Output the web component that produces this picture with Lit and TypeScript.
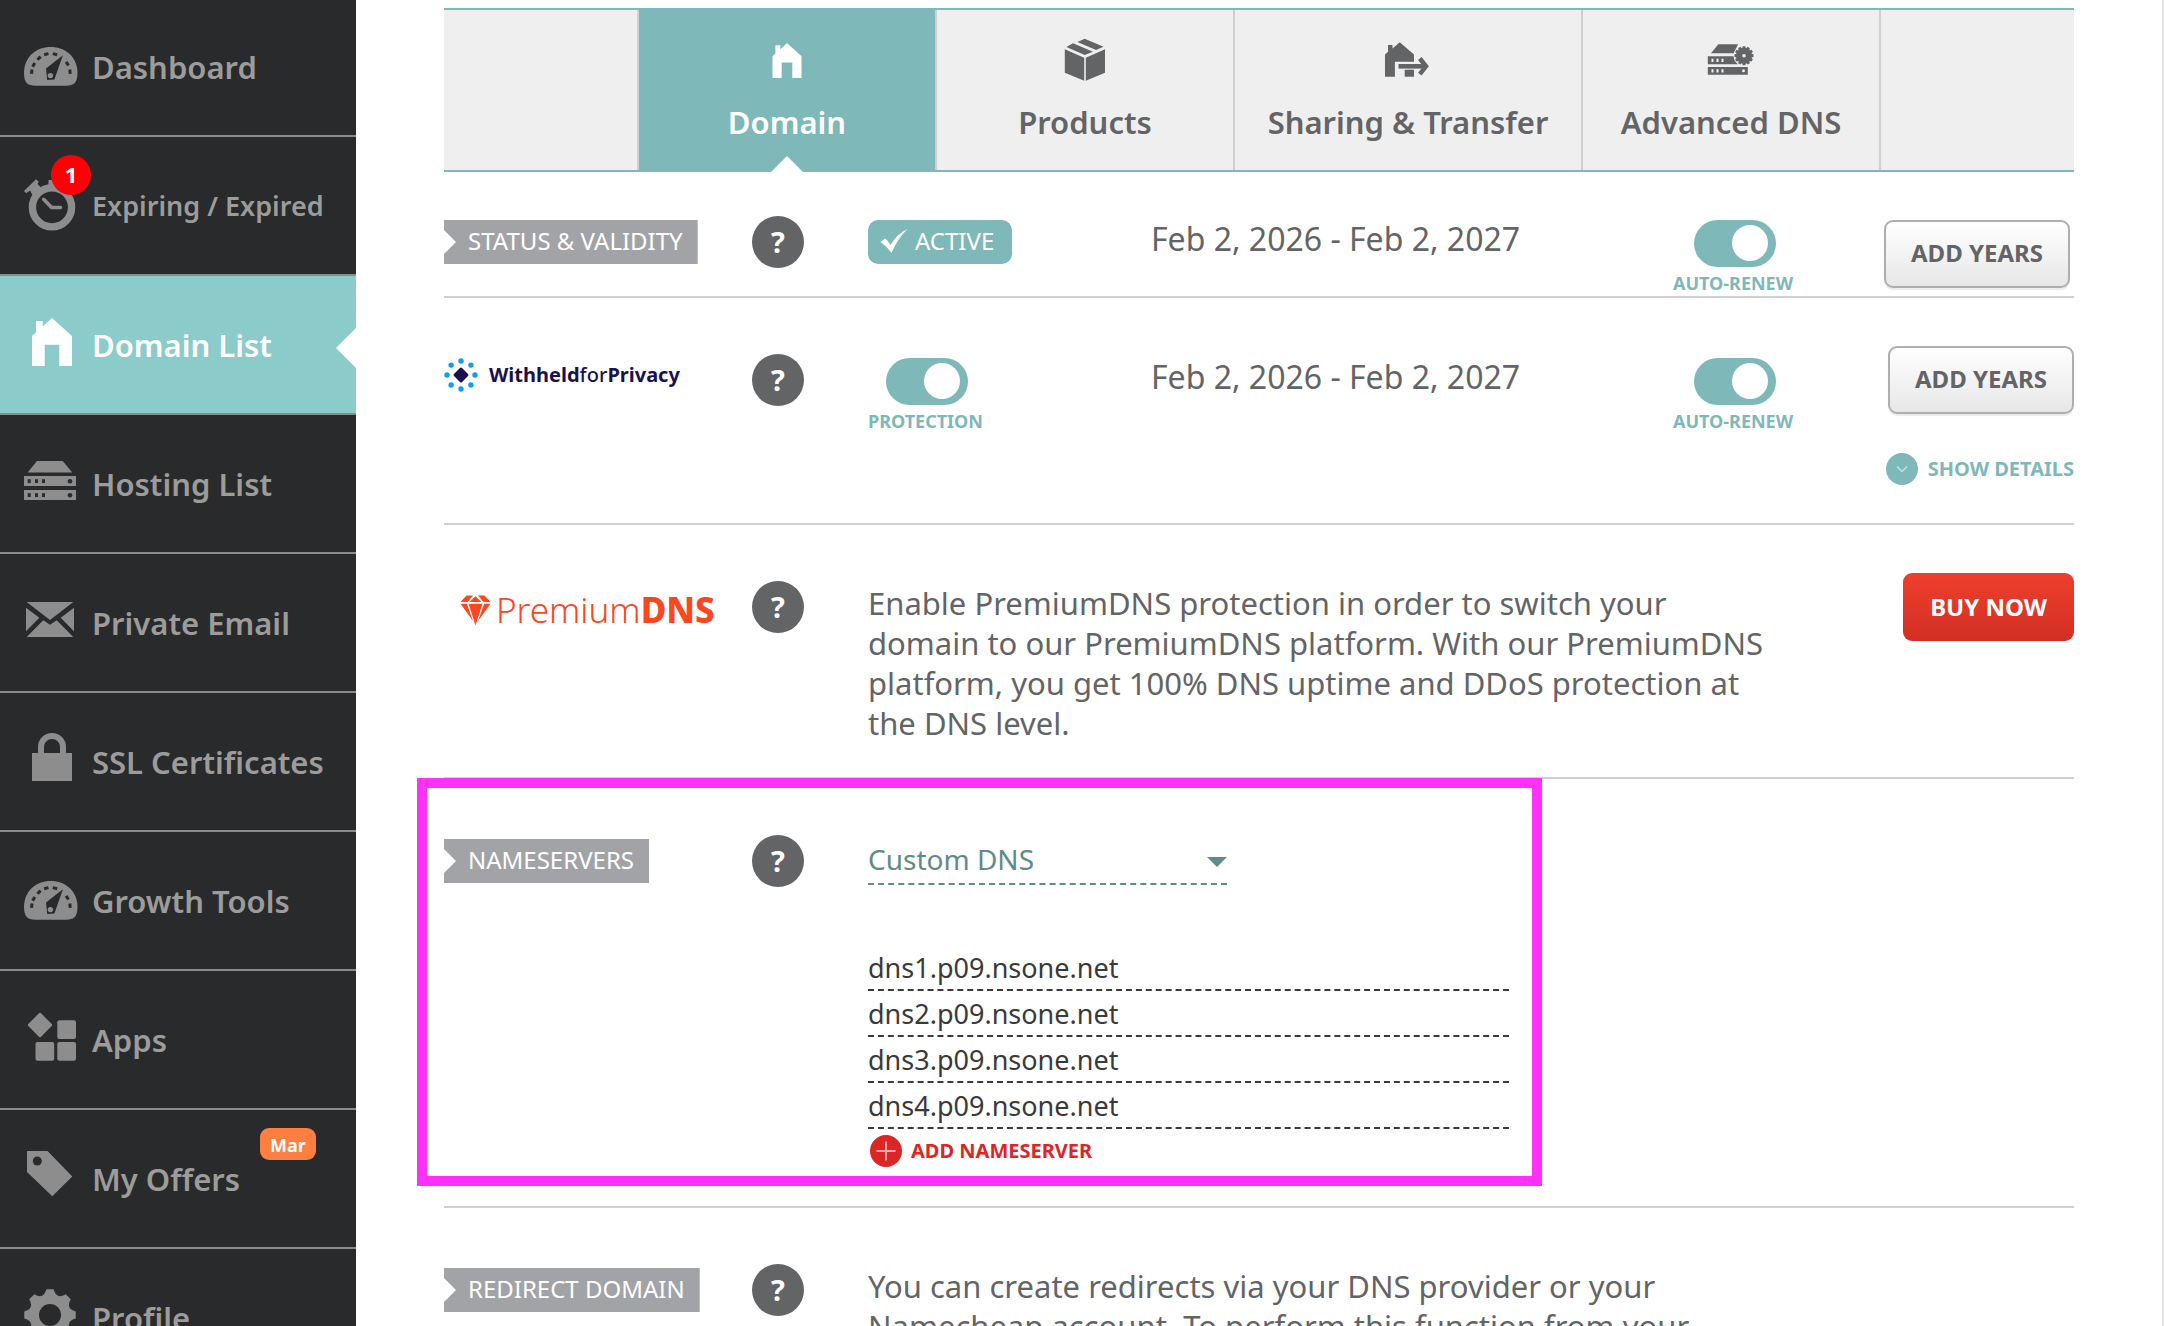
import { LitElement, html, svg, css, nothing, TemplateResult, SVGTemplateResult } from "lit";
import { customElement, state } from "lit/decorators.js";
import { classMap } from "lit/directives/class-map.js";

interface NavItem {
  label: string;
  icon: SVGTemplateResult;
  active?: boolean;
  small?: boolean;
  count?: string;
  tag?: string;
}

interface Tab {
  label: string;
  icon: SVGTemplateResult;
  wide?: boolean;
}

/** Closed outline of a cog wheel with curved valleys between its teeth. */
function cog(cx: number, cy: number, outer: number, inner: number, teeth: number, half: number): string {
  const at = (deg: number, r: number) => {
    const a = ((deg - 90) * Math.PI) / 180;
    return `${(cx + r * Math.cos(a)).toFixed(2)} ${(cy + r * Math.sin(a)).toFixed(2)}`;
  };
  const step = 360 / teeth;
  let d = `M${at(-half, outer)}`;
  for (let i = 0; i < teeth; i++) {
    const a = i * step;
    d += `L${at(a + half, outer)}Q${at(a + step / 2, inner)} ${at(a + step - half, outer)}`;
  }
  return d + "Z";
}

const HOUSE = "M28 2L48 20V50H35.3V28.7H20.7V50H8V20L12 16.3V5H18.7V10.4Z";

const gauge = svg`
  <path d="M0 35C0 19 12 9 26.7 9S53.5 19 53.5 35C53.5 44.500 50 47.700 42 47.700H11.500C3.500 47.700 0 44.500 0 35Z"/>
  <g class="cut">
    <rect x="6.300" y="31.500" width="3" height="4.400" transform="rotate(6 7.800 33.700)"/>
    <rect x="8.200" y="24.700" width="3" height="4.400" transform="rotate(30 9.700 26.900)"/>
    <rect x="13.500" y="18" width="3" height="4.400" transform="rotate(46 15 20.200)"/>
    <rect x="20.800" y="14" width="3" height="4.400" transform="rotate(76 22.300 16.200)"/>
    <rect x="29.500" y="14" width="3" height="4.400" transform="rotate(-76 31 16.200)"/>
    <rect x="41.800" y="23.500" width="3" height="4.400" transform="rotate(-32 43.300 25.700)"/>
    <rect x="44.500" y="31.500" width="3" height="4.400" transform="rotate(-6 46 33.700)"/>
    <path d="M38.900 17.300L22 30.500L23.200 42L30.400 41.500Z"/>
  </g>
  <circle cx="26.400" cy="37.600" r="2.700"/>`;

const stopwatch = svg`
  <circle cx="28" cy="30.300" r="19.600" fill="none" stroke="currentColor" stroke-width="7.400"/>
  <path d="M0 14L12 2.300L14.700 4.700L13.500 7L18 11.500L9 19L6 13.500L2.300 16.300Z"/>
  <rect x="24.500" y="3" width="8" height="8"/>
  <path d="M19.700 22.300L27.600 30.500H36.500" fill="none" stroke="currentColor" stroke-width="3.600" stroke-linecap="round" stroke-linejoin="round"/>`;

const house = svg`<path d=${HOUSE}/>`;

const server = svg`
  <path d="M13 6H38.700L48.300 17.500H3.700Z"/>
  <rect x="0" y="21" width="52" height="10"/>
  <rect x="0" y="35" width="52" height="10"/>
  <g class="cut">
    <rect x="3.700" y="24.200" width="3" height="3.800"/><rect x="11" y="24.200" width="3" height="3.800"/><rect x="18" y="24.200" width="3" height="3.800"/>
    <rect x="3.700" y="38.200" width="3" height="3.800"/><rect x="11" y="38.200" width="3" height="3.800"/><rect x="18" y="38.200" width="3" height="3.800"/>
    <circle cx="46" cy="26.200" r="2.300"/><circle cx="46" cy="40.200" r="2.300"/>
  </g>`;

const mail = svg`
  <path d="M2.700 8H49.300L26 26ZM2 13.700V37.300L15.300 23.700ZM50 13.700V37.300L36.700 23.700ZM2.700 43L19.300 26.300L26 30.700L32.700 26.300L49.300 43Z"/>`;

const lock = svg`
  <rect x="8" y="20" width="40" height="28"/>
  <path d="M17 21V14A11 11 0 0 1 39 14V21" fill="none" stroke="currentColor" stroke-width="6"/>`;

const apps = svg`
  <rect x="7" y="5" width="18" height="18" rx="1.500" transform="rotate(45 16 14)"/>
  <rect x="33.300" y="9.300" width="18.700" height="18.700" rx="2"/>
  <rect x="11.500" y="31" width="18.700" height="18.700" rx="2"/>
  <rect x="33.300" y="31" width="18.700" height="18.700" rx="2"/>`;

const tag = svg`
  <path d="M3 1H23.500L48.300 26.500L28.300 46.300L3 22Z"/>
  <circle class="cut" cx="13.300" cy="11" r="4.500"/>`;

const gear = svg`
  <path d=${cog(26, 26, 26, 16.5, 8, 8)}/>
  <circle class="cut" cx="26" cy="26" r="11"/>`;

const tabHouse = svg`<path transform="translate(9.700 3.600) scale(.725 .73)" d=${HOUSE}/>`;

const tabBox = svg`
  <path d="M9.800 11.300L29.200 19.700V42.700L9.800 34.700ZM30.800 19.700L50 11.300V34.700L30.800 42.700Z"/>
  <path d="M29.700 .700L48.500 8.700L41 12L22.400 4ZM18 5.300L38 13.700L29.700 17L11.400 9Z"/>`;

const tabShare = svg`
  <path d="M21.800 4.300L36 16.500V23.700H16.900V38.700H7V16.500L10 13.700V7H14.500V10.500Z"/>
  <rect x="26.700" y="31.700" width="9.300" height="7"/>
  <path d="M20.500 26H46V30.600H20.500Z"/>
  <path d="M41.800 20.500L48 28.300L41.800 36.100" fill="none" stroke="currentColor" stroke-width="4.500"/>`;

const tabServer = svg`
  <path d="M17.300 6.300H37L33 15.300H10Z"/>
  <path d="M6.800 18.300H33L37 26.300H6.800ZM6.800 29H46.800V36.700H6.800Z"/>
  <g class="hole">
    <rect x="10.500" y="20.700" width="2" height="3.300"/><rect x="15.500" y="20.700" width="2" height="3.300"/><rect x="20.500" y="20.700" width="2" height="3.300"/>
    <rect x="10.500" y="31.200" width="2" height="3.300"/><rect x="15.500" y="31.200" width="2" height="3.300"/><rect x="20.500" y="31.200" width="2" height="3.300"/>
    <circle cx="42.500" cy="32.800" r="1.500"/>
    <circle cx="43" cy="17.700" r="10.500"/>
  </g>
  <path d=${cog(43, 17.7, 9.6, 6, 12, 8)}/>
  <circle class="hole" cx="43" cy="17.700" r="1.800"/>`;

const NAV: NavItem[] = [
  { label: "Dashboard", icon: gauge },
  { label: "Expiring / Expired", icon: stopwatch, small: true, count: "1" },
  { label: "Domain List", icon: house, active: true },
  { label: "Hosting List", icon: server },
  { label: "Private Email", icon: mail },
  { label: "SSL Certificates", icon: lock },
  { label: "Growth Tools", icon: gauge },
  { label: "Apps", icon: apps },
  { label: "My Offers", icon: tag, tag: "Mar" },
  { label: "Profile", icon: gear },
];

const TABS: Tab[] = [
  { label: "Domain", icon: tabHouse },
  { label: "Products", icon: tabBox },
  { label: "Sharing & Transfer", icon: tabShare, wide: true },
  { label: "Advanced DNS", icon: tabServer },
];

@customElement("app-root")
export class AppRoot extends LitElement {
  @state() private tab = "Domain";
  @state() private nameservers = [
    "dns1.p09.nsone.net",
    "dns2.p09.nsone.net",
    "dns3.p09.nsone.net",
    "dns4.p09.nsone.net",
  ];

  static styles = css`
    :host {
      display: flex;
      height: 100vh;
      overflow: hidden;
      background: #fff;
      color: #636466;
      font-family: "Noto Sans", "Open Sans", sans-serif;
      font-size: 31px;
      line-height: 40px;
    }
    *, *::before, *::after { box-sizing: border-box; }
    svg { display: block; flex: none; fill: currentColor; }
    button, input, select { font: inherit; color: inherit; margin: 0; padding: 0; border: 0; border-radius: 0; background: none; }
    button { cursor: pointer; }
    a { color: inherit; text-decoration: none; }

    .side { flex: none; width: 356px; background: #292a2c; margin-top: -2px; }
    .nav-item {
      position: relative;
      display: flex;
      align-items: center;
      gap: 14px;
      height: 139px;
      padding-left: 24px;
      border-bottom: 2px solid #8b8b8b;
      color: #9c9c9a;
      font-size: 31px;
      font-weight: 600;
      white-space: nowrap;
    }
    .nav-item svg { color: #8d8d8d; }
    .nav-item.small { font-size: 27px; }
    .nav-item.active { background: #8bccca; color: #fff; }
    .nav-item.active svg { color: #fff; }
    .nav-item.active::after {
      content: "";
      position: absolute;
      right: 0;
      top: 52px;
      border: 20px solid transparent;
      border-left: 0;
      border-right-color: #fff;
    }
    .cut { fill: #292a2c; }
    .count, .tag { position: absolute; color: #fff; font-weight: 700; text-align: center; }
    .count { left: 51px; top: 18px; width: 40px; height: 40px; border-radius: 50%; background: #ff0008; font-size: 22px; line-height: 38px; }
    .tag { left: 260px; top: 18px; width: 56px; height: 32px; border-radius: 9px; background: #ff7e40; font-size: 18px; line-height: 34px; }

    .main { flex: 1; min-width: 0; padding: 8px 88px 0 88px; border-right: 2px solid #e2e2e2; }

    .tabs { display: flex; justify-content: center; border: solid #7fb8b8; border-width: 2px 0; background: #efefef; }
    .tab {
      position: relative;
      display: flex;
      flex-direction: column;
      align-items: center;
      gap: 20px;
      width: 298px;
      height: 160px;
      padding-top: 28px;
      border-right: 2px solid #cfd0d1;
      font-size: 31px;
      font-weight: 600;
    }
    .tab:first-child { width: 300px; border-left: 2px solid #cfd0d1; }
    .tab.wide { width: 348px; }
    .tab.on { background: #7fb8b8; background-clip: padding-box; color: #fff; }
    .tab.on::after {
      content: "";
      position: absolute;
      left: calc(50% - 16px);
      bottom: -2px;
      border: 16px solid transparent;
      border-top: 0;
      border-bottom-color: #fff;
    }
    .hole { fill: #efefef; }

    .row {
      position: relative;
      display: grid;
      grid-template-columns: 308px 116px 283px minmax(0, 1fr) 118px 283px;
      align-items: start;
      padding-top: 56px;
      border-bottom: 2px solid #cfd0d1;
    }
    .row.status { padding: 44px 0 3px; }
    .row.privacy { padding-bottom: 38px; }
    .row.premium { padding-bottom: 34px; }
    .row.servers { padding-bottom: 39px; }
    .row.last { border-bottom: 0; }

    .ribbon {
      justify-self: start;
      height: 44px;
      margin-top: 4px;
      padding: 0 15px 0 24px;
      background: #a2a3a7;
      clip-path: polygon(0 0, 100% 0, 100% 100%, 0 100%, 0 34px, 12px 22px, 0 10px);
      color: #fff;
      font-size: 24px;
      font-weight: 400;
      line-height: 41px;
    }
    .help {
      width: 52px;
      height: 52px;
      border-radius: 50%;
      background: #636466;
      color: #fff;
      font-size: 29px;
      font-weight: 700;
      line-height: 52px;
      text-align: center;
    }
    .active-pill {
      display: flex;
      align-items: center;
      justify-self: start;
      gap: 7px;
      height: 44px;
      margin-top: 4px;
      padding: 0 18px 2px 12px;
      border-radius: 10px;
      background: #7fb8b8;
      color: #fff;
      font-size: 24px;
    }
    .date { margin-top: 3px; font-size: 32px; white-space: nowrap; }

    .toggle {
      display: inline-flex;
      flex-direction: column;
      align-items: center;
      justify-self: start;
      gap: 6px;
      margin-top: 4px;
      color: #7fb8b8;
      font-size: 18px;
      font-weight: 700;
      line-height: 20px;
      white-space: nowrap;
    }
    .toggle input {
      appearance: none;
      width: 82px;
      height: 47px;
      margin-left: 4px;
      border-radius: 24px;
      padding: 5px 8px;
      background: #c4c5c7;
      cursor: pointer;
    }
    .toggle input::before { content: ""; display: block; width: 36px; height: 36px; border-radius: 50%; background: #fff; }
    .toggle input:checked { background: #7fb8b8; }
    .toggle input:checked::before { margin-left: auto; }

    .actions { display: flex; flex-direction: column; align-items: flex-end; grid-column: 6; margin-top: -8px; }
    .status .actions { margin-top: 4px; padding-right: 4px; }
    .btn {
      height: 68px;
      padding: 0 25px 2px;
      border: 2px solid #adaeb0;
      border-radius: 9px;
      background: linear-gradient(#fff, #e7e7e7);
      box-shadow: 0 2px 1px #ececec;
      font-size: 24px;
      font-weight: 700;
      white-space: nowrap;
    }
    .btn.buy { border: 0; padding: 0 27px; background: linear-gradient(#ee3f2d, #d22f24); box-shadow: none; color: #fff; }
    .details {
      display: flex;
      align-items: center;
      gap: 10px;
      margin-top: 39px;
      color: #7fb8b8;
      font-size: 20px;
      font-weight: 700;
      line-height: 32px;
      white-space: nowrap;
    }

    .withheld { display: flex; align-items: center; gap: 11px; margin-top: 4px; height: 34px; color: #1b114f; font-size: 20px; font-weight: 700; line-height: 34px; }
    .withheld span { font-weight: 500; }
    .premium-logo { display: flex; align-items: center; gap: 5px; margin-top: 9px; padding-left: 16px; color: #fa4720; font-size: 35px; font-weight: 300; white-space: nowrap; }
    .premium-logo b { font-weight: 800; }

    .copy { grid-column: 3 / 6; max-width: 904px; margin: 2px 0 0; }

    .ns { grid-column: 3 / 6; display: flex; flex-direction: column; align-items: flex-start; }
    .select-wrap { position: relative; display: block; width: 359px; margin-bottom: 60px; color: #5f8b8a; font-size: 28px; }
    .select-wrap select { display: block; appearance: none; width: 100%; height: 50px; border-bottom: 2px dashed #5f8b8a; cursor: pointer; }
    .select-wrap::after {
      content: "";
      position: absolute;
      right: 0;
      top: 22px;
      border: 10px solid transparent;
      border-bottom: 0;
      border-top-color: #5f8b8a;
      pointer-events: none;
    }
    .server { width: 641px; height: 46px; border-bottom: 2px dashed #3a3a3b; color: #3a3a3b; font-size: 27px; }
    .add {
      display: flex;
      align-items: center;
      gap: 9px;
      margin-top: 6px;
      padding-left: 2px;
      color: #dc2626;
      font-size: 20px;
      font-weight: 700;
      line-height: 32px;
    }
    .highlight { position: absolute; left: -27px; top: -1px; bottom: 20px; width: 1125px; border: 10px solid #ff30f8; pointer-events: none; }
  `;

  private help(topic: string): TemplateResult {
    return html`<button class="help" aria-label=${"Help: " + topic}>?</button>`;
  }

  private toggle(id: string, label: string): TemplateResult {
    return html`<label class="toggle" for=${id}>
      <input id=${id} type="checkbox" role="switch" checked />${label}
    </label>`;
  }

  private addNameserver() {
    this.nameservers = [...this.nameservers, ""];
  }

  private nav() {
    return html`<nav class="side">
      ${NAV.map(
        (item) => html`<a class=${classMap({ "nav-item": true, active: !!item.active, small: !!item.small })} href="#">
          <svg width="54" height="57" viewBox="0 0 54 57" aria-hidden="true">${item.icon}</svg>
          ${item.label}
          ${item.count ? html`<span class="count">${item.count}</span>` : nothing}
          ${item.tag ? html`<span class="tag">${item.tag}</span>` : nothing}
        </a>`
      )}
    </nav>`;
  }

  private tabs() {
    return html`<div class="tabs" role="tablist">
      ${TABS.map(
        (t) => html`<button
          class=${classMap({ tab: true, wide: !!t.wide, on: t.label === this.tab })}
          role="tab"
          aria-selected=${t.label === this.tab}
          @click=${() => (this.tab = t.label)}
        >
          <svg width="60" height="44" viewBox="0 0 60 44" aria-hidden="true">${t.icon}</svg>
          ${t.label}
        </button>`
      )}
    </div>`;
  }

  private withheldLogo() {
    const dots = Array.from({ length: 8 }, (_, i) => {
      const a = (i * Math.PI) / 4;
      return svg`<circle cx=${17 + 14 * Math.cos(a)} cy=${17 + 14 * Math.sin(a)} r="2.700" fill="#119cf7"/>`;
    });
    return html`<div class="withheld">
      <svg width="34" height="34" viewBox="0 0 34 34" aria-hidden="true">
        ${dots}
        <rect x="11.300" y="11.300" width="11.400" height="11.400" rx="1.500" transform="rotate(45 17 17)" />
      </svg>
      <div>Withheld<span>for</span>Privacy</div>
    </div>`;
  }

  private premiumLogo() {
    return html`<div class="premium-logo">
      <svg width="31" height="31" viewBox="0 0 31 31" aria-hidden="true">
        <path d="M6.500 .500H13L7.500 7H.500ZM18 .500H24.500L30.500 7H23.500ZM15.500 1.200L21.500 7H9.500ZM.500 8.800H6.800L13 26ZM30.500 8.800H24.200L18 26ZM8.600 8.800H22.400L15.500 30.500Z" />
      </svg>
      <div>Premium<b>DNS</b></div>
    </div>`;
  }

  render() {
    return html`
      ${this.nav()}
      <main class="main">
        ${this.tabs()}

        <section class="row status">
          <div class="ribbon">STATUS &amp; VALIDITY</div>
          ${this.help("status and validity")}
          <div class="active-pill">
            <svg width="28" height="24" viewBox="0 0 28 24" aria-hidden="true">
              <path d="M.500 13L5 9.500Q8.500 12 10.500 16Q17 5 27.500 0Q18 9 11.500 24Q6.500 17 .500 13Z" />
            </svg>
            ACTIVE
          </div>
          <div class="date">Feb 2, 2026 - Feb 2, 2027</div>
          ${this.toggle("domain-renew", "AUTO-RENEW")}
          <div class="actions"><button class="btn">ADD YEARS</button></div>
        </section>

        <section class="row privacy">
          ${this.withheldLogo()} ${this.help("domain privacy")}
          ${this.toggle("protection", "PROTECTION")}
          <div class="date">Feb 2, 2026 - Feb 2, 2027</div>
          ${this.toggle("privacy-renew", "AUTO-RENEW")}
          <div class="actions">
            <button class="btn">ADD YEARS</button>
            <button class="details">
              <svg width="32" height="32" viewBox="0 0 32 32" aria-hidden="true">
                <circle cx="16" cy="16" r="16" />
                <path d="M11 13.500L16 18.500L21 13.500" fill="none" stroke="#c5e0df" stroke-width="1.500" />
              </svg>
              SHOW DETAILS
            </button>
          </div>
        </section>

        <section class="row premium">
          ${this.premiumLogo()} ${this.help("PremiumDNS")}
          <p class="copy">
            Enable PremiumDNS protection in order to switch your domain to our PremiumDNS platform. With our PremiumDNS
            platform, you get 100% DNS uptime and DDoS protection at the DNS level.
          </p>
          <div class="actions"><button class="btn buy">BUY NOW</button></div>
        </section>

        <section class="row servers">
          <div class="ribbon">NAMESERVERS</div>
          ${this.help("nameservers")}
          <div class="ns">
            <label class="select-wrap">
              <select aria-label="Nameserver type">
                <option selected>Custom DNS</option>
              </select>
            </label>
            ${this.nameservers.map(
              (ns, i) => html`<input class="server" type="text" aria-label=${`Nameserver ${i + 1}`} .value=${ns} />`
            )}
            <button class="add" @click=${this.addNameserver}>
              <svg width="32" height="32" viewBox="0 0 32 32" aria-hidden="true">
                <circle cx="16" cy="16" r="16" />
                <path d="M16 6.500V25.500M6.500 16H25.500" stroke="#f5a9a9" stroke-width="2" />
              </svg>
              ADD NAMESERVER
            </button>
          </div>
          <div class="highlight"></div>
        </section>

        <section class="row last">
          <div class="ribbon">REDIRECT DOMAIN</div>
          ${this.help("redirects")}
          <p class="copy">
            You can create redirects via your DNS provider or your Namecheap account. To perform this function from your
          </p>
        </section>
      </main>
    `;
  }
}
